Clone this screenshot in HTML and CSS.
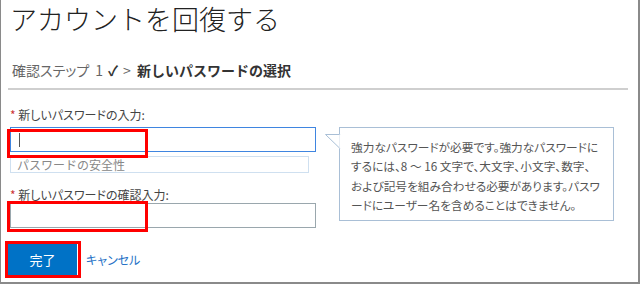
FILE: index.html
```html
<!DOCTYPE html>
<html lang="ja">
<head>
<meta charset="utf-8">
<link rel="stylesheet" href="styles.css">
</head>
<body>
<div class="frame">
  <h1 class="title">アカウントを回復する</h1>
  <div class="crumbs"><span class="done">確認ステップ</span><span class="done step">1</span><span class="check">✓</span><span class="done sep">&gt;</span><span class="current">新しいパスワードの選択</span></div>
  <div class="rule"></div>
  <div class="form-row">
    <div class="fields">
      <label class="label"><span class="req">*</span> 新しいパスワードの入力:</label>
      <div class="field-wrap">
        <div class="input input1 focused"><span class="caret"></span></div>
        <div class="mark mark1"></div>
      </div>
      <div class="strength">パスワードの安全性</div>
      <label class="label label2"><span class="req">*</span> 新しいパスワードの確認入力:</label>
      <div class="field-wrap">
        <div class="input input2"></div>
        <div class="mark mark2"></div>
      </div>
      <div class="actions">
        <div class="field-wrap">
          <button class="btn">完了</button>
          <div class="mark mark-btn"></div>
        </div>
        <a class="cancel">キャンセル</a>
      </div>
    </div>
    <div class="tip">
      <svg class="tip-arrow" width="16" height="16" viewBox="0 0 16 16"><polygon points="0.5,1.5 15,1.5 15,15.5" fill="#fff" stroke="#a9bfd6" stroke-width="1"/><rect x="14.5" y="1.5" width="2" height="14" fill="#fff"/></svg>
      <p class="tip-text">強力なパスワードが必要です。強力なパスワードに<br>するには、8 ～ 16 文字で、大文字、小文字、数字、<br>および記号を組み合わせる必要があります。パスワ<br>ードにユーザー名を含めることはできません。</p>
    </div>
  </div>
</div>
</body>
</html>
```
FILE: styles.css
```css
* { box-sizing: border-box; }
html, body { margin: 0; padding: 0; background: #fff; }
body { font-family: "Noto Sans CJK JP", "Noto Sans", sans-serif; color: #333; }
.frame {
  width: 640px; height: 284px;
  border-left: 1px solid #8a8a8a;
  border-right: 2px solid #8a8a8a;
  border-bottom: 2px solid #8a8a8a;
  padding-left: 9px;
  overflow: hidden;
}
.title {
  margin: 0; padding: 0;
  font-size: 27px; font-weight: 300; line-height: 38px;
  color: #222;
}
.crumbs {
  margin-top: 22px; font-size: 14px; line-height: 20px; height: 20px;
  padding-left: 2px; white-space: nowrap;
}
.done { color: #666; }
.crumbs .done:first-child { font-feature-settings: "palt"; }
.step { margin-left: 6px; }
.check { margin-left: 5px; color: #333; font-weight: 600; }
.sep { margin-left: 5px; }
.current { margin-left: 6px; color: #333; font-weight: 600; }
.rule { margin: 8px 0 0 -2px; width: 620px; height: 2px; background: #cfcfcf; }
.form-row { display: flex; align-items: flex-start; margin-top: 17px; }
.fields { width: 306px; }
.label { display: block; font-size: 12px; line-height: 16px; height: 16px; color: #444; font-feature-settings: "palt"; }
.req { color: #c33; }
.label2 { margin-top: 14px; }
.field-wrap { position: relative; }
.input { height: 25px; border: 1px solid #9aa7ad; background: #fff; }
.input1 { margin-top: 4px; }
.input2 { margin-top: 0; }
.input.focused { border-color: #3f85e0; display: flex; align-items: center; padding-left: 8px; }
.caret { width: 1px; height: 14px; background: #555; }
.mark { position: absolute; border: 3px solid #f00; }
.mark1 { left: -3px; top: 2px; width: 141px; height: 29px; }
.mark2 { left: -3px; top: -2px; width: 141px; height: 31px; }
.strength {
  margin-top: 4px; width: 299px; height: 17px;
  border: 1px solid #cfe0f0; font-size: 12px; line-height: 15px;
  color: #888; padding-left: 6px;
}
.actions { display: flex; align-items: center; margin-top: 16px; }
.btn {
  display: block; margin-left: -2px; width: 69px; height: 31px; border: 0;
  background: #0072c6; color: #fff; font-family: inherit; font-size: 13px;
}
.mark-btn { left: -5px; top: -3px; width: 76px; height: 37px; }
.cancel { margin-left: 9px; font-size: 12px; color: #2672c6; font-feature-settings: "palt"; }
.tip {
  position: relative; margin-left: 23px; margin-top: 20px;
  width: 275px; height: 94px; border: 1px solid #a9bfd6; background: #fff;
  padding: 9px 0 0 11px;
}
.tip-arrow { position: absolute; left: -15px; top: 5px; }
.tip-text {
  margin: 0; font-size: 11.7px; line-height: 19.3px; color: #555;
  white-space: nowrap; font-feature-settings: "palt";
}
```
